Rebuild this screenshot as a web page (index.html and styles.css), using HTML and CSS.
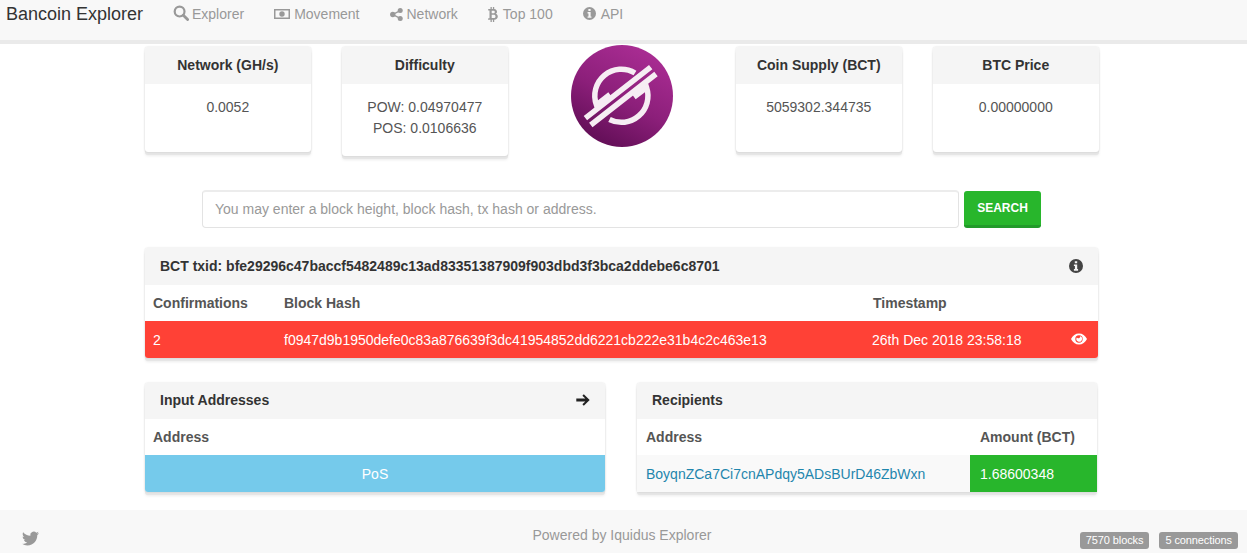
FILE: index.html
```html
<!DOCTYPE html>
<html lang="en">
<head>
<meta charset="utf-8">
<title>Bancoin Explorer</title>
<link rel="stylesheet" href="styles.css">
</head>
<body>
<nav class="navbar">
  <a class="brand">Bancoin Explorer</a>
  <ul class="nav-links">
    <li><svg class="ico ico-search" viewBox="0 0 16 16"><circle cx="6.6" cy="6.6" r="4.9" fill="none" stroke="currentColor" stroke-width="2.2"/><path d="M10.3 10.3l4.3 4.3" stroke="currentColor" stroke-width="2.8" stroke-linecap="round"/></svg>Explorer</li>
    <li><svg class="ico ico-money" viewBox="0 0 16 12"><path fill-rule="evenodd" fill="currentColor" d="M0 1h16v10H0zM1.500 2.400v7.200h13V2.400zM8 3.300a2.700 2.700 0 1 1 0 5.400 2.700 2.700 0 0 1 0-5.400z"/></svg>Movement</li>
    <li><svg class="ico ico-share" viewBox="0 0 14 14"><circle cx="11" cy="2.800" r="2.700" fill="currentColor"/><circle cx="11" cy="11.200" r="2.700" fill="currentColor"/><circle cx="3" cy="7" r="2.900" fill="currentColor"/><path d="M11 2.800L3 7l8 4.200" fill="none" stroke="currentColor" stroke-width="1.500"/></svg>Network</li>
    <li><svg class="ico ico-btc" viewBox="0 0 10 15"><path fill-rule="evenodd" fill="currentColor" d="M2.500 0h1.300v2h1.100V0h1.300v2.100C8 2.400 9 3.400 9 4.700c0 1-.5 1.700-1.400 2.100C8.900 7.100 9.800 8 9.800 9.400 9.800 11.300 8.400 12.500 6.200 12.700V15H4.900v-2.200H3.800V15H2.500v-2.200H0l.3-1.600h1.200V3.600H.2V2h2.300zM3.700 3.700v2.500h1.700c.9 0 1.400-.5 1.400-1.250S6.300 3.700 5.400 3.700zM3.700 7.800v3.200h2c1.100 0 1.800-.6 1.800-1.600S6.800 7.800 5.700 7.800z"/></svg>Top 100</li>
    <li><svg class="ico ico-info" viewBox="0 0 14 14"><path fill-rule="evenodd" fill="currentColor" d="M7 0a7 7 0 1 1 0 14A7 7 0 0 1 7 0zM5.800 2.200v2.100h2.400V2.200zM4.900 5.500v1.500h1v3.100h-1v1.600h4.200v-1.600h-.9V5.500z"/></svg>API</li>
  </ul>
</nav>

<main class="main">
  <section class="stats">
    <div class="panel stat"><h3 class="stat-title">Network (GH/s)</h3><div class="stat-body"><p>0.0052</p></div></div>
    <div class="panel stat stat-tall"><h3 class="stat-title">Difficulty</h3><div class="stat-body"><p>POW: 0.04970477</p><p>POS: 0.0106636</p></div></div>
    <div class="logo-col">
      <svg class="logo" viewBox="0 0 102 102">
        <defs><linearGradient id="lg" x1="0.8" y1="0.1" x2="0.35" y2="0.95"><stop offset="0" stop-color="#a82c92"/><stop offset="0.55" stop-color="#8c1f7a"/><stop offset="1" stop-color="#66105a"/></linearGradient></defs>
        <circle cx="51" cy="51" r="51" fill="url(#lg)"/>
        <g fill="none" stroke="#f6edf3" stroke-width="5.500">
          <path d="M14.400 73.200L79.700 22.200M19.800 80L85 29"/>
          <path d="M64 28A26.500 26.500 0 0 0 25.500 60L39 49.500"/>
          <path d="M38.500 74.500A26.500 26.500 0 0 0 75.600 42.500L63 52"/>
        </g>
      </svg>
    </div>
    <div class="panel stat"><h3 class="stat-title">Coin Supply (BCT)</h3><div class="stat-body"><p>5059302.344735</p></div></div>
    <div class="panel stat"><h3 class="stat-title">BTC Price</h3><div class="stat-body"><p>0.00000000</p></div></div>
  </section>

  <form class="search">
    <input class="search-input" type="text" placeholder="You may enter a block height, block hash, tx hash or address.">
    <button class="search-btn" type="button">SEARCH</button>
  </form>

  <section class="panel tx">
    <header class="panel-head tx-head">
      <span>BCT txid: bfe29296c47baccf5482489c13ad83351387909f903dbd3f3bca2ddebe6c8701</span>
      <svg class="head-ico" viewBox="0 0 14 14"><path fill-rule="evenodd" fill="currentColor" d="M7 0a7 7 0 1 1 0 14A7 7 0 0 1 7 0zM5.800 2.200v2.100h2.400V2.200zM4.900 5.500v1.500h1v3.100h-1v1.600h4.200v-1.600h-.9V5.500z"/></svg>
    </header>
    <table class="data tx-table">
      <thead><tr><th class="c-conf">Confirmations</th><th class="c-hash">Block Hash</th><th>Timestamp</th></tr></thead>
      <tbody><tr class="row-danger"><td>2</td><td>f0947d9b1950defe0c83a876639f3dc41954852dd6221cb222e31b4c2c463e13</td><td class="c-time"><span>26th Dec 2018 23:58:18</span><svg class="eye" viewBox="0 0 16 12"><path fill-rule="evenodd" fill="currentColor" d="M8 .5c3.500 0 6.300 2 8 5.500-1.700 3.500-4.500 5.500-8 5.500S1.700 9.500 0 6C1.700 2.500 4.500.5 8 .5zM8 2.300a3.700 3.700 0 1 0 0 7.400 3.700 3.700 0 0 0 0-7.400zM5.800 4.500c.5.900 2 1 2.900.2.300-.3.400-.8.300-1.500A2.800 2.800 0 1 1 5.800 4.500z"/></svg></td></tr></tbody>
    </table>
  </section>

  <section class="io">
    <div class="panel io-panel">
      <header class="panel-head">
        <span>Input Addresses</span>
        <svg class="head-ico arrow" viewBox="0 0 14 12"><path fill="currentColor" d="M7.800.3L13.700 6l-5.900 5.700-1.400-1.500 2.900-2.800H.3V4.600h9L6.400 1.800z"/></svg>
      </header>
      <table class="data">
        <thead><tr><th>Address</th></tr></thead>
        <tbody><tr class="row-info"><td>PoS</td></tr></tbody>
      </table>
    </div>
    <div class="panel io-panel">
      <header class="panel-head"><span>Recipients</span></header>
      <table class="data recipients">
        <thead><tr><th class="c-addr">Address</th><th class="c-amount">Amount (BCT)</th></tr></thead>
        <tbody><tr class="row-plain"><td class="c-link"><a class="link">BoyqnZCa7Ci7cnAPdqy5ADsBUrD46ZbWxn</a></td><td class="amount">1.68600348</td></tr></tbody>
      </table>
    </div>
  </section>
</main>

<footer class="footer">
  <svg class="twitter" viewBox="0 0 24 24"><path fill="currentColor" d="M23.953 4.570a10 10 0 0 1-2.825.775 4.958 4.958 0 0 0 2.163-2.723c-.951.555-2.005.959-3.127 1.184a4.920 4.920 0 0 0-8.384 4.482C7.690 8.095 4.067 6.130 1.640 3.162a4.822 4.822 0 0 0-.666 2.475c0 1.710.870 3.213 2.188 4.096a4.904 4.904 0 0 1-2.228-.616v.060a4.923 4.923 0 0 0 3.946 4.827 4.996 4.996 0 0 1-2.212.085 4.936 4.936 0 0 0 4.604 3.417 9.867 9.867 0 0 1-6.102 2.105c-.390 0-.779-.023-1.170-.067a13.995 13.995 0 0 0 7.557 2.209c9.053 0 13.998-7.496 13.998-13.985 0-.210 0-.420-.015-.630A9.935 9.935 0 0 0 24 4.590z"/></svg>
  <p class="powered">Powered by Iquidus Explorer</p>
  <div class="badges"><span class="badge">7570 blocks</span><span class="badge">5 connections</span></div>
</footer>
</body>
</html>
```

FILE: styles.css
```css
* { box-sizing: border-box; }
html, body { margin: 0; padding: 0; }
body {
  font-family: "Liberation Sans", Arial, sans-serif;
  font-size: 14px;
  line-height: 20px;
  color: #555;
  background: #fff;
  height: 553px;
  overflow: hidden;
}
.navbar {
  display: flex;
  height: 44px;
  padding: 4px 0 0 6px;
  background: #f8f8f8;
  border-bottom: 4px solid #eaeaea;
}
.brand { font-size: 18px; color: #333; width: 152px; }
.nav-links {
  display: flex;
  list-style: none;
  margin: 0;
  padding: 0;
  color: #999;
}
.nav-links li { display: flex; align-items: center; height: 20px; padding: 0 15px; }
.ico { display: block; flex: none; color: #999; }
.ico-search { width: 16px; height: 16px; margin: -2px 3px 0 0; }
.ico-money { width: 16px; height: 12px; margin-right: 4px; }
.ico-share { width: 13px; height: 13px; margin-right: 4px; }
.ico-btc { width: 10px; height: 15px; margin-right: 5px; }
.ico-info { width: 13px; height: 13px; margin: -1px 5px 0 0; }

.main { width: 955px; margin-left: 144px; }
.panel {
  background: #fff;
  border-radius: 3px;
  box-shadow: 0 0 2px rgba(0,0,0,.16), 0 3px 0 #e6e6e6, 0 4px 3px rgba(0,0,0,.08);
}
.stats { display: flex; gap: 31.4px; align-items: flex-start; padding: 3px 0 0 1px; }
.stat { width: 165.6px; height: 105px; overflow: hidden; }
.stat-tall { height: 109px; }
.stat-title {
  margin: 0;
  height: 37px;
  background: #f5f5f5;
  color: #333;
  font-size: 14px;
  font-weight: bold;
  line-height: 36px;
  text-align: center;
}
.stat-body { padding: 13px 0 0; text-align: center; line-height: 21px; }
.stat-body p { margin: 0; }
.logo-col { width: 165.6px; display: flex; justify-content: center; margin-top: -2px; }
.logo { width: 102px; height: 102px; display: block; }

.search { display: flex; gap: 5px; margin: 34px 0 0 58px; align-items: center; }
.search-input {
  width: 757px;
  height: 38px;
  padding: 0 12px 2px;
  border: 1px solid #e3e3e3;
  border-top: 2px solid #ececec;
  border-radius: 4px;
  font: 14px "Liberation Sans", Arial, sans-serif;
  background: #fff;
}
.search-input::placeholder { color: #999; opacity: 1; }
.search-btn {
  width: 77px;
  height: 37px;
  border: 0;
  border-bottom: 3px solid #229a2a;
  border-radius: 3px;
  background: #28b62c;
  color: #fff;
  font: bold 12px "Liberation Sans", Arial, sans-serif;
  padding: 0;
}

.tx { margin: 20px 0 0 1px; width: 953px; }
.panel-head {
  display: flex;
  justify-content: space-between;
  align-items: center;
  height: 36px;
  padding: 0 15px 2px;
  background: #f5f5f5;
  border-radius: 3px 3px 0 0;
  color: #333;
  font-weight: bold;
}
.tx-head { height: 37px; }
.head-ico { width: 14px; height: 14px; display: block; color: #444; }
.arrow { color: #222; height: 12px; }

.data { width: 100%; border-collapse: collapse; table-layout: fixed; }
.data th {
  height: 36px;
  padding: 0 8px;
  text-align: left;
  font-weight: bold;
  color: #555;
}
.data td { height: 37px; padding: 0 8px; }
.c-conf { width: 131px; }
.c-hash { width: 589px; }
.row-danger td { background: #ff4136; color: #fff; }
.row-danger td:first-child { border-radius: 0 0 0 3px; }
.row-danger td:last-child { border-radius: 0 0 3px 0; }
.data td.c-time { position: relative; padding-left: 7px; }
.eye { position: absolute; right: 11px; top: 12px; width: 16px; height: 12px; color: #fff; }

.io { display: flex; gap: 32px; margin: 25px 0 0 1px; }
.io-panel { width: 460px; }
.row-info td { background: #75caeb; color: #fff; text-align: center; border-radius: 0 0 3px 3px; }
.row-plain td { background: #f9f9f9; }
.data th.c-addr { width: 333px; padding-left: 9px; }
.data td.c-link { padding-left: 9px; }
.link { color: #1f86ad; }
.data th.c-amount { padding-left: 10px; }
.row-plain td.amount { background: #28b62c; color: #fff; padding-left: 10px; }

.footer {
  display: grid;
  grid-template-columns: 510px 180px 1fr;
  align-items: start;
  height: 43px;
  margin-top: 18px;
  padding: 0 9px 0 22px;
  background: #f8f8f8;
  color: #999;
}
.twitter { width: 17px; height: 17px; margin-top: 20px; color: #999; display: block; }
.powered { margin: 15px 0 0; text-align: center; white-space: nowrap; }
.badges { display: flex; justify-content: flex-end; gap: 10px; margin-top: 22px; }
.badge {
  height: 17px;
  padding: 0 6px;
  border-radius: 3px;
  background: #999;
  color: #fff;
  font-size: 11px;
  letter-spacing: -.1px;
  line-height: 17px;
  white-space: nowrap;
}
```
